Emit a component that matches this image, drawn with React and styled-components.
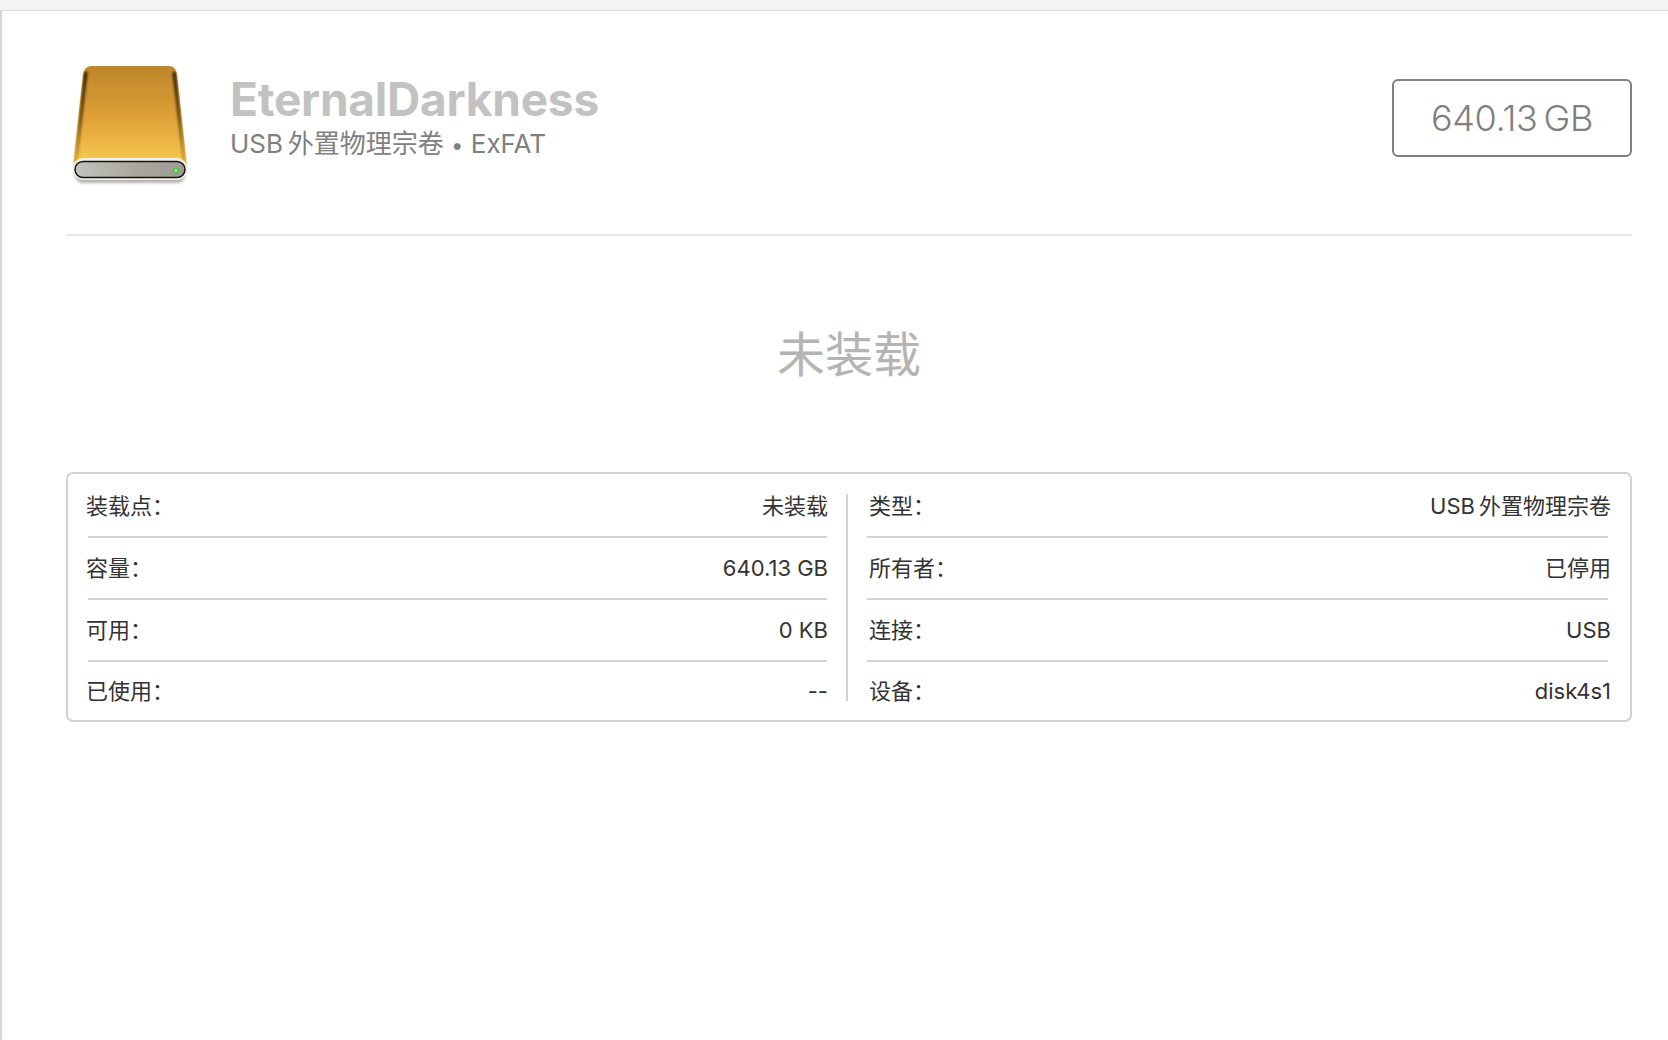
import React from "react";
import styled, { createGlobalStyle } from "styled-components";

const GlobalStyle = createGlobalStyle`
  html, body {
    margin: 0;
    padding: 0;
    background: #fff;
  }
  * {
    box-sizing: border-box;
  }
`;

const FONT = `Inter, "Noto Sans CJK SC", sans-serif`;

const Page = styled.div`
  width: 1668px;
  height: 1040px;
  overflow: hidden;
  display: flex;
  flex-direction: column;
  font-family: ${FONT};
  background: #fff;
`;

const TopStrip = styled.div`
  height: 11px;
  flex: none;
  background: #f2f3f5;
  border-bottom: 1px solid #dcdde0;
`;

const Main = styled.main`
  flex: 1;
  border-left: 2px solid #d6d6d6;
  padding: 0 36px 0 64px;
`;

const Header = styled.header`
  height: 225px;
  display: flex;
  align-items: flex-start;
  border-bottom: 2px solid #e6e6e6;
`;

const DriveIcon = styled.svg`
  width: 118px;
  height: 120px;
  flex: none;
  margin: 55px 0 0 5px;
`;

const Titles = styled.div`
  margin: 63px 0 0 41px;
  flex: 1;
`;

const VolumeName = styled.h1`
  margin: 0;
  font-size: 46px;
  line-height: 50px;
  font-weight: 700;
  letter-spacing: -0.22px;
  color: #c2c2c2;
`;

const VolumeMeta = styled.div`
  margin-top: 4px;
  font-size: 26px;
  line-height: 32px;
  color: #808080;
`;

const MetaDot = styled.span`
  font-size: 22px;
`;

const CapacityBox = styled.div`
  width: 240px;
  height: 78px;
  margin-top: 68px;
  display: flex;
  align-items: center;
  justify-content: center;
  border: 2px solid #808080;
  border-radius: 6px;
  font-size: 36px;
  font-weight: 300;
  letter-spacing: -0.4px;
  color: #808080;
`;

const Status = styled.div`
  height: 236px;
  padding-bottom: 6px;
  display: flex;
  align-items: center;
  justify-content: center;
  font-size: 48px;
  color: #b4b4b4;
`;

const InfoCard = styled.section`
  padding: 2px 22px 0 20px;
  display: grid;
  grid-template-columns: 739px 2px 1fr;
  column-gap: 19px;
  border: 2px solid #d2d2d2;
  border-radius: 7px;
`;

const InfoColumn = styled.div`
  display: flex;
  flex-direction: column;
`;

const ColumnDivider = styled.div`
  margin: 18px 0 19px;
  background: #d2d2d2;
`;

const InfoRow = styled.div`
  height: ${(p) => (p.$last ? "58px" : "62px")};
  display: flex;
  align-items: center;
  justify-content: space-between;
  font-size: 22px;
  line-height: 30px;
  color: #333;
  border-bottom: ${(p) => (p.$last ? "none" : "2px solid #d2d2d2")};
`;

const InfoLabel = styled.span`
  margin-left: ${(p) => (p.$inset ? "2px" : "-2px")};
`;

const InfoValue = styled.span`
  margin-right: ${(p) => (p.$inset ? "-3px" : "-1px")};
`;

const infoLeft = [
  ["装载点：", "未装载"],
  ["容量：", "640.13 GB"],
  ["可用：", "0 KB"],
  ["已使用：", "--"],
];

const infoRight = [
  ["类型：", "USB\u2009外置物理宗卷"],
  ["所有者：", "已停用"],
  ["连接：", "USB"],
  ["设备：", "disk4s1"],
];

const Drive = () => (
  <DriveIcon viewBox="0 0 118 120">
    <defs>
      <linearGradient id="bodyFill" x1="0" y1="0" x2="0" y2="1">
        <stop offset="0" stopColor="#bd852b" />
        <stop offset="0.5" stopColor="#dd9f36" />
        <stop offset="0.92" stopColor="#f6c64f" />
        <stop offset="1" stopColor="#e9b846" />
      </linearGradient>
      <linearGradient id="edgeFill" x1="0" y1="0" x2="0" y2="1">
        <stop offset="0" stopColor="#2e1f05" />
        <stop offset="0.5" stopColor="#6d4c10" />
        <stop offset="1" stopColor="#d8a63a" />
      </linearGradient>
      <linearGradient id="slotFill" x1="0" y1="0" x2="1" y2="0">
        <stop offset="0" stopColor="#c2c1bb" />
        <stop offset="0.55" stopColor="#aaa8a0" />
        <stop offset="1" stopColor="#9c9a92" />
      </linearGradient>
      <filter id="driveShadow" x="-10%" y="-30%" width="120%" height="170%">
        <feGaussianBlur stdDeviation="1.8" />
      </filter>
      <filter id="edgeBlur" x="-100%" y="-5%" width="300%" height="110%">
        <feGaussianBlur stdDeviation="0.8" />
      </filter>
    </defs>
    <rect x="4" y="102" width="110" height="15" rx="7.5" fill="#000" opacity="0.3" filter="url(#driveShadow)" />
    <path d="M21 0 H98 Q105 0 106 9 L116 100 H2 L12 9 Q13 0 21 0 Z" fill="url(#bodyFill)" />
    <path d="M15 6 L5 96" stroke="url(#edgeFill)" strokeWidth="3.2" fill="none" filter="url(#edgeBlur)" />
    <path d="M103 6 L113 96" stroke="url(#edgeFill)" strokeWidth="3.2" fill="none" filter="url(#edgeBlur)" />
    <rect x="1.5" y="92" width="115" height="22" rx="11" fill="#f1f0ea" />
    <rect x="4" y="95.5" width="110" height="16" rx="8" fill="url(#slotFill)" stroke="#14130f" strokeWidth="1.5" />
    <circle cx="105" cy="104.5" r="3" fill="#4fc53a" />
    <circle cx="105" cy="104.5" r="1.4" fill="#a5f08e" />
  </DriveIcon>
);

const InfoList = ({ items, inset }) => (
  <InfoColumn>
    {items.map(([label, value], i) => (
      <InfoRow key={label} $last={i === items.length - 1}>
        <InfoLabel $inset={inset}>{label}</InfoLabel>
        <InfoValue $inset={inset}>{value}</InfoValue>
      </InfoRow>
    ))}
  </InfoColumn>
);

const App = () => (
  <>
    <GlobalStyle />
    <Page>
      <TopStrip />
      <Main>
        <Header>
          <Drive />
          <Titles>
            <VolumeName>EternalDarkness</VolumeName>
            <VolumeMeta>
              USB{"\u2009"}外置物理宗卷 <MetaDot>•</MetaDot> ExFAT
            </VolumeMeta>
          </Titles>
          <CapacityBox>640.13{"\u2009"}GB</CapacityBox>
        </Header>
        <Status>未装载</Status>
        <InfoCard>
          <InfoList items={infoLeft} />
          <ColumnDivider />
          <InfoList items={infoRight} inset />
        </InfoCard>
      </Main>
    </Page>
  </>
);

export default App;
